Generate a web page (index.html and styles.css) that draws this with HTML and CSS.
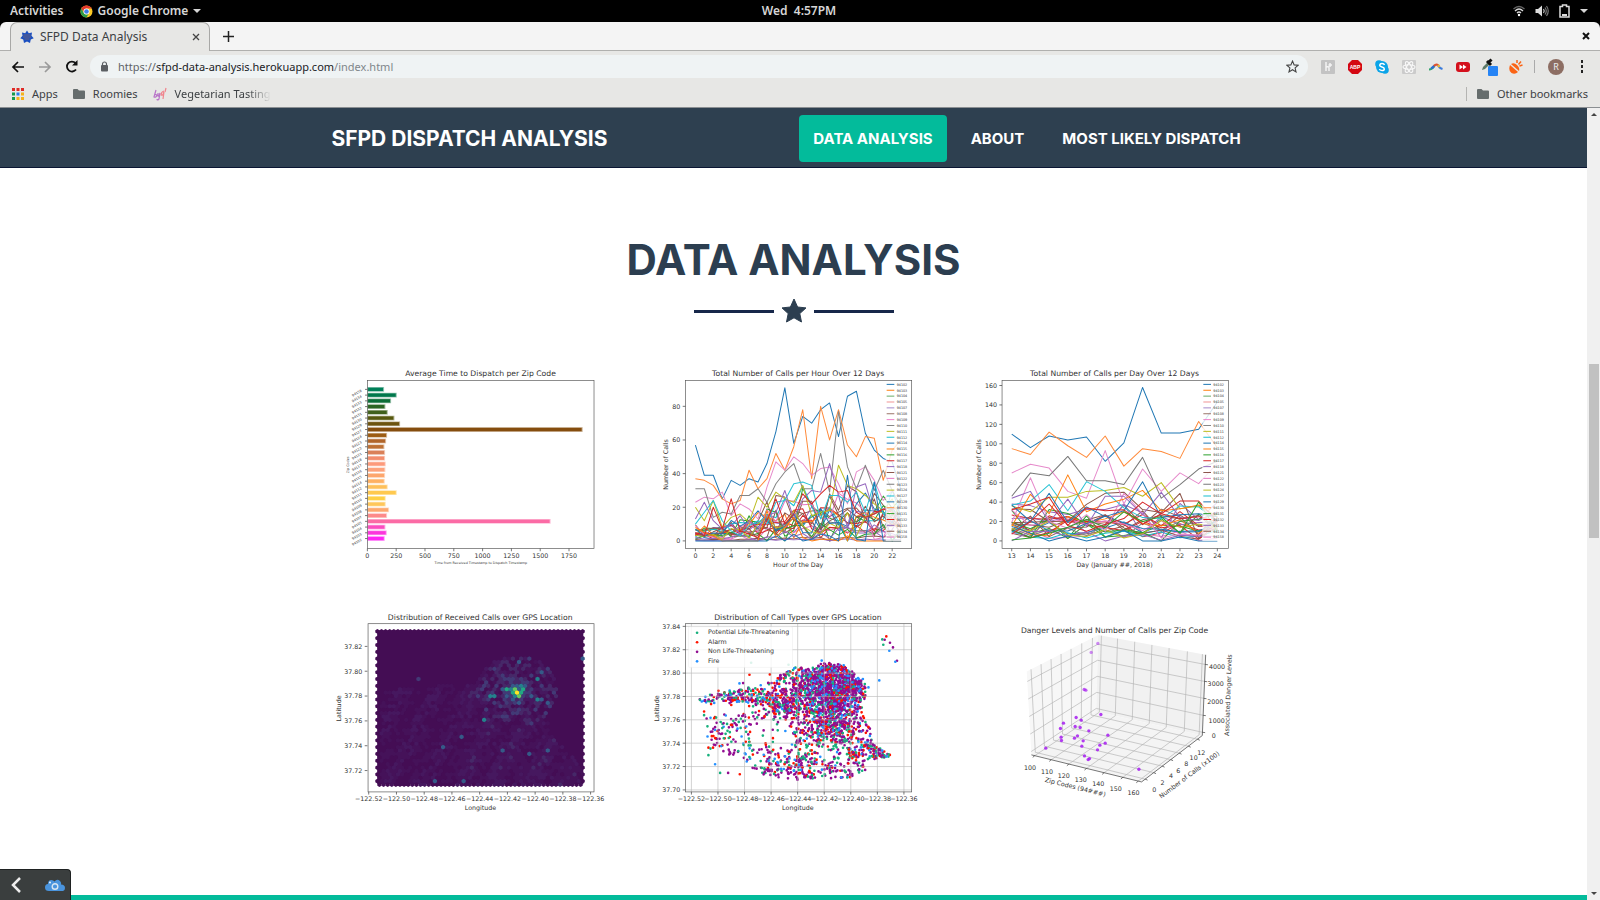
FILE: index.html
```html
<!DOCTYPE html>
<html lang="en">
<head>
<meta charset="utf-8">
<title>SFPD Data Analysis</title>
<link rel="stylesheet" href="styles.css">
</head>
<body>
<div class="system-bar">
  <div class="system-left">
    <button class="sys-btn">Activities</button>
    <button class="sys-btn app-menu">
      <svg width="13" height="13" viewBox="0 0 26 26" aria-hidden="true"><circle cx="13" cy="13" r="12" fill="#fbc926"/><path d="M2.6 7A12 12 0 0 1 23.4 7H13A6 6 0 0 0 7.8 16z" fill="#e2372b"/><path d="M2.6 7A12 12 0 0 0 13 25l5.2-9A6 6 0 0 1 7.8 16z" fill="#2c9c49"/><circle cx="13" cy="13" r="6" fill="#fff"/><circle cx="13" cy="13" r="4.6" fill="#3f7fe8"/></svg>
      <span>Google Chrome</span>
      <i class="caret"></i>
    </button>
  </div>
  <button class="sys-btn clock">Wed&nbsp; 4:57PM</button>
  <div class="system-right">
    <svg width="12" height="12" viewBox="0 0 24 24" fill="none" stroke="#d8d8d8" stroke-width="2.6" aria-hidden="true"><path d="M1 8Q12-2 23 8" stroke="#666"/><path d="M4 12Q12 4 20 12M8 16Q12 12 16 16"/><circle cx="12" cy="20" r="2.4" fill="#fff" stroke="none"/></svg>
    <svg width="14" height="12" viewBox="0 0 28 24" fill="none" stroke-width="2.4" aria-hidden="true"><path d="M1 8h5l8-7v22l-8-7H1z" fill="#ddd"/><path d="M17 8q3 4 0 8" stroke="#ccc"/><path d="M20 5q5 7 0 14M23 2q7 10 0 20" stroke="#777"/></svg>
    <svg width="11" height="14" viewBox="0 0 22 28" fill="none" stroke="#ddd" stroke-width="3" aria-hidden="true"><path d="M7 5V2h8v3h5v21H2V5z"/><path d="M6 22h10" stroke-width="4"/></svg>
    <i class="caret"></i>
  </div>
</div>

<div class="tab-strip">
  <div class="tab">
    <svg width="14" height="14" viewBox="0 0 28 28" aria-hidden="true"><path d="M14 1l3.6 5.4L24 5l-1 6.6 4.5 4.8-6 2.8L20 26l-6-3-6 3-1.500-6.800-6-2.800L5 11.600 4 5l6.400 1.400z" fill="#1b4fc0"/><path d="M7 10h14M6 14h16M9 18h10" stroke="#8a6a60" stroke-width="1.500"/></svg>
    <span class="tab-title">SFPD Data Analysis</span>
    <button class="icon-btn" aria-label="Close tab"><svg width="8" height="8" viewBox="0 0 8 8" stroke="#444" stroke-width="1.300"><path d="M1 1l6 6M7 1L1 7"/></svg></button>
  </div>
  <button class="icon-btn new-tab" aria-label="New tab"><svg width="11" height="11" viewBox="0 0 11 11" stroke="#222" stroke-width="1.500"><path d="M5.500 0v11M0 5.500h11"/></svg></button>
  <button class="icon-btn window-close" aria-label="Close window"><svg width="8" height="8" viewBox="0 0 8 8" stroke="#111" stroke-width="2"><path d="M1 1l6 6M7 1L1 7"/></svg></button>
</div>

<div class="toolbar">
  <div class="nav-buttons">
    <button class="icon-btn" aria-label="Back"><svg width="14" height="12" viewBox="0 0 14 12" fill="none" stroke="#111" stroke-width="1.700"><path d="M13 6H2M7 1L2 6l5 5"/></svg></button>
    <button class="icon-btn" aria-label="Forward"><svg width="14" height="12" viewBox="0 0 14 12" fill="none" stroke="#9a9a9a" stroke-width="1.700"><path d="M1 6h11M7 1l5 5-5 5"/></svg></button>
    <button class="icon-btn" aria-label="Reload"><svg width="13" height="13" viewBox="0 0 13 13" fill="none" stroke="#111" stroke-width="1.800"><path d="M11 9.500A5 5 0 1 1 10.500 3"/><path d="M12.500 0v5.500H7z" fill="#111" stroke="none"/></svg></button>
  </div>
  <div class="omnibox">
    <svg width="9" height="11" viewBox="0 0 9 11" aria-hidden="true"><rect x="1" y="4" width="7" height="6.500" rx="1" fill="#5b5f63"/><path d="M2.500 4.500V3a2 2 0 0 1 4 0v1.500" fill="none" stroke="#5b5f63" stroke-width="1.200"/></svg>
    <div class="url" role="textbox" aria-label="Address"><span class="dim">https://</span>sfpd-data-analysis.herokuapp.com<span class="faint">/index.html</span></div>
    <button class="icon-btn" aria-label="Bookmark this page"><svg width="13" height="13" viewBox="0 0 24 24" fill="none" stroke="#444" stroke-width="2"><path d="M12 2l3 7 7.500.600-5.700 5 1.700 7.400L12 18l-6.500 4 1.700-7.400-5.700-5L9 9z"/></svg></button>
  </div>
  <div class="extensions">
    <svg width="14" height="14" viewBox="0 0 14 14" aria-hidden="true"><rect width="14" height="14" rx="1" fill="#c3c3c3"/><path d="M5 2v9M5 7q3-1 3 1v3M9 3v4M7.500 5h3.500" stroke="#f4f4f4" stroke-width="1.500" fill="none"/></svg>
    <svg width="14" height="14" viewBox="0 0 14 14" aria-hidden="true"><path d="M4 0h6l4 4v6l-4 4H4l-4-4V4z" fill="#d40812"/><text x="7" y="9" text-anchor="middle" class="abp">ABP</text></svg>
    <svg width="14" height="14" viewBox="0 0 14 14" aria-hidden="true"><circle cx="7" cy="7" r="6" fill="#0ba4e8"/><circle cx="4" cy="4" r="3.800" fill="#0ba4e8"/><circle cx="10" cy="10" r="3.800" fill="#0ba4e8"/><path d="M9.500 5Q9 3.500 7 3.500T4.700 5.200Q4.700 6.500 7 7t2.300 1.900Q9.300 10.500 7 10.500T4.500 9" fill="none" stroke="#fff" stroke-width="1.500"/></svg>
    <svg width="14" height="14" viewBox="0 0 14 14" aria-hidden="true"><rect width="14" height="14" rx="1" fill="#cbcbcb"/><g fill="none" stroke="#f8f8f8" stroke-width="1.100"><ellipse cx="7" cy="7" rx="6" ry="2.300"/><ellipse cx="7" cy="7" rx="6" ry="2.300" transform="rotate(60 7 7)"/><ellipse cx="7" cy="7" rx="6" ry="2.300" transform="rotate(120 7 7)"/></g></svg>
    <svg width="14" height="14" viewBox="0 0 14 14" fill="none" stroke-width="2.200" aria-hidden="true"><path d="M0 9.500q3 0 5-3" stroke="#2fa36b"/><path d="M2 8.500q2-1 3.500-3" stroke="#2a6fd0"/><path d="M5 6q2-2.500 4.500-.5" stroke="#e2522d"/><path d="M9 5q1 3 4.500 4" stroke="#3a7bdc"/><path d="M9 5l1.500 2" stroke="#f1b52a"/></svg>
    <svg width="14" height="14" viewBox="0 0 14 14" aria-hidden="true"><rect y="2" width="14" height="10" rx="3" fill="#d4101c"/><path d="M3.500 4.500L7 7 3.500 9.500zM7 4.500L10.500 7 7 9.500z" fill="#fff"/></svg>
    <svg class="tight" width="17" height="19" viewBox="0 0 17 19" aria-hidden="true"><path d="M1 13l1-3 5-5 2 2-5 5z" fill="#5c7a68"/><path d="M6 4l4 4M7.500 5.500l3-3" stroke="#111" stroke-width="3"/><rect x="7" y="9" width="10" height="10" rx="1" fill="#2684f5"/></svg>
    <svg class="tight" width="14" height="14" viewBox="0 0 14 14" aria-hidden="true"><path d="M1 5l8 7q-3 3-6.500 1T1 5z" fill="#fb6415"/><path d="M2 4q3-2 6 1t2 6z" fill="#fb6415"/><path d="M8 3V0M9.500 4.500L12 1.500M10.500 6l3-1" stroke="#fb6415" stroke-width="1.500"/></svg>
    <i class="bar tight"></i>
    <button class="avatar">R</button>
    <button class="icon-btn" aria-label="Menu"><svg width="4" height="13" viewBox="0 0 4 13" fill="#222"><rect x="1" width="2" height="3"/><rect x="1" y="5" width="2" height="3"/><rect x="1" y="10" width="2" height="3"/></svg></button>
  </div>
</div>

<div class="bookmarks">
  <a class="bookmark" href="#"><svg width="12" height="12" viewBox="0 0 12 12" aria-hidden="true"><g fill="#df2a25"><path d="M0 0h3v3H0zM4.500 0h3v3h-3zM9 0h3v3H9z"/></g><path d="M0 4.500h3v3H0zM0 9h3v3H0z" fill="#169a4b"/><path d="M4.500 4.500h3v3h-3z" fill="#2a7de8"/><path d="M9 4.500h3v3H9zM4.500 9h3v3h-3zM9 9h3v3H9z" fill="#f5b21b"/></svg>Apps</a>
  <a class="bookmark" href="#"><svg width="12" height="10" viewBox="0 0 12 10" aria-hidden="true"><path d="M0 1q0-1 1-1h3.500L6 1.500h5q1 0 1 1V9q0 1-1 1H1q-1 0-1-1z" fill="#666d6d"/></svg>Roomies</a>
  <a class="bookmark fade" href="#"><svg width="14" height="14" viewBox="0 0 14 14" fill="none" stroke-width="1.200" aria-hidden="true"><path d="M3 3L1 10q2 1 3-2-1-1-2.500 0M5 6v3q1 1 2-3l-1 6q-2 2-2 0" stroke="#b873c8"/><path d="M11 4Q8 5 8 8q2 1 3-3l-1 7M12 5l1-4" stroke="#f0848c"/></svg>Vegetarian Tasting</a>
  <a class="bookmark other" href="#"><svg width="12" height="10" viewBox="0 0 12 10" aria-hidden="true"><path d="M0 1q0-1 1-1h3.500L6 1.500h5q1 0 1 1V9q0 1-1 1H1q-1 0-1-1z" fill="#666d6d"/></svg>Other bookmarks</a>
</div>

<div class="viewport">
  <div class="page">
    <nav class="site-nav">
      <div class="container nav-row">
        <a class="brand" href="#">SFPD DISPATCH ANALYSIS</a>
        <div class="links">
          <a class="link active" href="#">DATA ANALYSIS</a>
          <a class="link" href="#">ABOUT</a>
          <a class="link" href="#">MOST LIKELY DISPATCH</a>
        </div>
      </div>
    </nav>
    <section class="analysis">
      <h2>DATA ANALYSIS</h2>
      <div class="divider"><i></i><svg width="26" height="26" viewBox="0 0 26 26" aria-hidden="true"><path d="M13 1l3.600 8 8.400.900-6.200 5.700 1.700 8.400L13 19.800 5.500 24l1.700-8.400L1 9.900 9.400 9z" fill="#2c3e50" stroke="#2c3e50" stroke-linejoin="round"/></svg><i></i></div>
      <div class="container charts">
        <svg class="chart" id="dispatch" viewBox="36 -3 879 660" role="img" aria-label="Average time to dispatch"></svg>
        <svg class="chart" id="hourly" viewBox="-3 -3 879 660" role="img" aria-label="Calls per hour"></svg>
        <svg class="chart" id="daily" viewBox="18 -3 879 660" role="img" aria-label="Calls per day"></svg>
        <svg class="chart" id="density" viewBox="36 -9 879 660" role="img" aria-label="Call density"></svg>
        <svg class="chart" id="types" viewBox="12 -9 879 660" role="img" aria-label="Call types"></svg>
        <svg class="chart" id="danger" viewBox="-102 -39 879 660" role="img" aria-label="Danger levels"></svg>
      </div>
    </section>
    <section class="about"></section>
  </div>
  <div class="scrollbar"><i class="arrow up"></i><i class="thumb"></i><i class="arrow down"></i></div>
  <div class="dock">
    <button class="icon-btn" aria-label="Collapse"><svg width="10" height="16" viewBox="0 0 10 16" fill="none" stroke="#eee" stroke-width="2.500"><path d="M9 1L2 8l7 7"/></svg></button>
    <svg width="20" height="12" viewBox="0 0 20 12" aria-hidden="true"><path d="M4 12Q0 12 0 8.500T3 5Q3 1 6.500 1q2 0 3 1.500Q12-.5 15 2q1.500 1.500 1 3.500 4 0 4 3.500T16.500 12z" fill="#4a94dd"/><circle cx="10" cy="7.500" r="2.800" fill="none" stroke="#d8e6f2" stroke-width="1.400"/><circle cx="5" cy="3.500" r="1" fill="#e8f2fb"/></svg>
  </div>
</div>
<script src="charts.js"></script>
</body>
</html>
```

FILE: styles.css
```css
* { box-sizing: border-box; }
body {
  margin: 0;
  height: 100vh;
  overflow: hidden;
  display: flex;
  flex-direction: column;
  background: #000;
  color: #3c4043;
  font: 12px/18px "Noto Sans", sans-serif;
}
button { border: 0; padding: 0; background: none; color: inherit; font: inherit; }
a { color: inherit; text-decoration: none; }
svg { flex: none; display: block; }
.icon-btn { display: grid; place-items: center; }

.system-bar {
  flex: none;
  height: 22px;
  display: grid;
  grid-template-columns: 1fr auto 1fr;
  align-items: center;
  padding: 0 12px 0 10px;
  color: #d6d6d6;
  font-weight: 600;
}
.system-left, .app-menu, .system-right { display: flex; align-items: center; }
.system-left { gap: 16px; }
.app-menu { gap: 5px; }
.system-right { justify-content: flex-end; gap: 10px; }
.caret { border: 4px solid transparent; border-top-color: #d6d6d6; border-bottom: 0; }

.tab-strip {
  flex: none;
  height: 29px;
  display: flex;
  align-items: center;
  padding: 0 10px;
  background: #f4f4f4;
  border-bottom: 1px solid #b0b0ae;
  border-radius: 6px 6px 0 0;
}
.tab {
  align-self: stretch;
  width: 200px;
  display: flex;
  align-items: center;
  gap: 6px;
  padding: 0 9px;
  margin-bottom: -1px;
  background: #e7e7e5;
  border: 1px solid #a8a8a6;
  border-bottom: 0;
  border-radius: 7px 7px 0 0;
}
.tab-title { flex: 1; }
.new-tab { margin-left: 13px; }
.window-close { margin-left: auto; }

.toolbar {
  flex: none;
  height: 31px;
  display: flex;
  align-items: center;
  padding: 0 16px 0 11px;
  background: #e7e7e5;
}
.nav-buttons { display: flex; gap: 13px; width: 79px; }
.omnibox {
  flex: 1;
  height: 23px;
  display: flex;
  align-items: center;
  gap: 9px;
  padding: 0 9px 0 10px;
  border-radius: 12px;
  background: #eff3f4;
}
.url { flex: 1; color: #202124; font-size: 11px; }
.dim { color: #5f6368; }
.faint { color: #80868b; }
.extensions { display: flex; align-items: center; gap: 13px; margin-left: 13px; }
.tight { margin-left: -2px; }
.abp { font: bold 5px "Liberation Sans", sans-serif; fill: #fff; }
.bar { width: 1px; height: 13px; background: #aaa; }
.avatar { width: 16px; height: 16px; margin-right: 3px; border-radius: 50%; background: #8d6e63; color: #eee; font-size: 9px; line-height: 16px; }

.bookmarks {
  flex: none;
  height: 26px;
  display: flex;
  align-items: center;
  gap: 15px;
  padding: 0 12px 2px;
  background: #e7e7e5;
  border-bottom: 1px solid #8b8f92;
  font-size: 11px;
}
.bookmark { display: flex; align-items: center; gap: 8px; white-space: nowrap; }
.fade { mask-image: linear-gradient(90deg, #000 80%, transparent); }
.other { margin-left: auto; padding-left: 10px; border-left: 1px solid #b4b4b2; line-height: 14px; }

.viewport { position: relative; flex: 1; min-height: 0; display: flex; background: #fff; }
.page { flex: 1; overflow: hidden; }
.container { width: 60%; min-width: 950px; margin: 0 auto; padding: 0 10px 0 14px; }
.site-nav { background: #2e4050; border-bottom: 1px solid #0a1633; padding: 7px 0 5px; color: #fff; font-family: Inter, sans-serif; font-weight: 700; }
.nav-row { display: flex; align-items: center; justify-content: space-between; }
.brand { font-size: 21px; line-height: 24px; }
.links { display: flex; gap: 10px; padding-right: 5px; }
.link { padding: 0 14px; border-radius: 4px; font-size: 15px; line-height: 47px; }
.active { background: #03bb9b; }

.analysis { padding: 67px 0 77px; background: #fff; }
h2 { margin: 0; text-align: center; color: #2c3e50; font: 700 42px/50px Inter, sans-serif; }
.divider { display: flex; align-items: center; justify-content: center; gap: 7px; margin: 13px 0 30px; }
.divider i { width: 80px; height: 3px; background: #17284a; }
.charts { display: grid; grid-template-columns: repeat(3, 1fr); gap: 23px 24px; }
.chart { width: 100%; height: auto; font-family: "DejaVu Sans", sans-serif; fill: #333; }
.title { font-size: 23px; }
.label { font-size: 19px; }
.small { font-size: 10px; }
.about { height: 160px; background: #03bb9b; }

.scrollbar { width: 13px; display: flex; flex-direction: column; align-items: center; padding: 5px 0; background: #f0f0f0; }
.arrow { border: 3px solid transparent; }
.up { border-top: 0; border-bottom-color: #444; }
.down { border-bottom: 0; border-top-color: #444; margin-top: auto; }
.thumb { width: 10px; height: 174px; margin-top: 248px; background: #c1c1c1; }
.dock {
  position: absolute;
  left: 0;
  bottom: 0;
  height: 31px;
  display: flex;
  align-items: center;
  gap: 24px;
  padding: 0 5px 0 11px;
  background: #3a3e3e;
  border: 1px solid #1f2222;
  border-width: 1px 1px 0 0;
  border-radius: 0 4px 0 0;
}
```

FILE: charts.js
```js
const NS = "http://www.w3.org/2000/svg";
let seed = 7;
function rnd() {
  seed = (seed + 0x6d2b79f5) | 0;
  let t = Math.imul(seed ^ (seed >>> 15), 1 | seed);
  t = (t + Math.imul(t ^ (t >>> 7), 61 | t)) ^ t;
  return ((t ^ (t >>> 14)) >>> 0) / 4294967296;
}
function gauss() { return (rnd() + rnd() + rnd() + rnd() - 2) * 1.2; }

function add(parent, tag, attrs, text) {
  const el = document.createElementNS(NS, tag);
  for (const k in attrs) el.setAttribute(k, attrs[k]);
  if (text !== undefined) el.textContent = text;
  parent.appendChild(el);
  return el;
}
function text(svg, x, y, str, cls, anchor, angle) {
  const a = { x, y, class: cls, "text-anchor": anchor || "middle" };
  if (angle) a.transform = `rotate(${angle} ${x} ${y})`;
  add(svg, "text", a, str);
}
function frame(svg, x, y, w, h) {
  add(svg, "rect", { x, y, width: w, height: h, fill: "none", stroke: "#555", "stroke-width": 2 });
}
function xTicks(svg, bottom, ticks, x0, step) {
  ticks.forEach((t, i) => {
    const x = x0 + step * i;
    add(svg, "path", { d: `M${x} ${bottom}v8`, stroke: "#333", "stroke-width": 2 });
    text(svg, x, bottom + 28, t, "label");
  });
}
function yTicks(svg, left, ticks, y0, step) {
  ticks.forEach((t, i) => {
    const y = y0 + step * i;
    add(svg, "path", { d: `M${left} ${y}h-8`, stroke: "#333", "stroke-width": 2 });
    text(svg, left - 15, y + 7, t, "label", "end");
  });
}

const zips = "02 03 04 05 07 08 09 10 11 12 14 15 16 17 18 21 22 23 24 27 29 30 31 32 33 34 58".split(" ");
const cycle = ["#1f77b4", "#ff7f0e", "#2ca02c", "#d62728", "#9467bd", "#8c564b", "#e377c2", "#7f7f7f", "#bcbd22", "#17becf"];
const order = [5, 2, 3, 5, 4, 6, 0, 2, 5, 3, 7, 9, 4, 1, 5, 3, 2, 6, 5, 4, 8, 0];
const legendColors = ["#1f77b4", "#ff7f0e", "#67ac67", "#f09494", "#a48aca", "#9a7468", "#ee82cb", "#888", "#bcbd22", "#17becf",
  "#1f77b4", "#ff7f0e", "#2ca02c", "#d62728", "#9467bd", "#8c564b", "#e377c2", "#777", "#bcbd22", "#17becf",
  "#1f77b4", "#ff8a3a", "#2ca02c", "#e31a1c", "#9467bd", "#8c564b", "#e377c2"];

/* Average time to dispatch */
(function () {
  const svg = document.getElementById("dispatch");
  const ends = [194, 232, 215, 198, 205, 225, 242, 789, 203, 200, 195, 197, 197, 199, 198, 197, 196, 205, 232, 199, 199, 209, 203, 693, 198, 202, 196];
  const colors = ["#007f58", "#00784c", "#0b6d38", "#2b6523", "#40611c", "#57590f", "#6c530f", "#854d0e", "#9c5c14", "#b0652a", "#bd7034", "#da8058", "#f38d6d", "#fd9a7b", "#fda27b", "#fda66d", "#feb062", "#fec05a", "#ffc94f", "#ffd045", "#ffc75a", "#fda86e", "#fd8a8a", "#fb6ba5", "#fb4dc0", "#fb36dc", "#ff25f5"];
  text(svg, 484, 62, "Average Time to Dispatch per Zip Code", "title");
  ends.forEach((end, i) => {
    const y = 103 + i * 17.19;
    add(svg, "rect", { x: 145, y: y - 7, width: end - 144, height: 14, fill: colors[i], opacity: .45 });
    add(svg, "rect", { x: 147, y: y - 5, width: end - 149, height: 10, fill: colors[i] });
    add(svg, "path", { d: `M145 ${y}h-7`, stroke: "#333", "stroke-width": 2 });
    text(svg, 129, y + 6, "941" + zips[26 - i], "small", "end", -30);
  });
  frame(svg, 145, 76, 679, 504);
  xTicks(svg, 580, [0, 250, 500, 750, 1000, 1250, 1500, 1750], 145, 86.3);
  text(svg, 485, 627, "Time from Received Timestamp to Dispatch Timestamp", "small");
  text(svg, 90, 329, "Zip Codes", "small", "middle", -90);
})();

function lineChart(id, o) {
  const svg = document.getElementById(id);
  const path = vals => "M" + vals.map((v, i) => `${o.x0 + i * o.dx} ${557 - v * o.dy}`).join("L");
  text(svg, o.cx, 62, o.title, "title");
  const n = o.main[0].v.length;
  for (let k = 0; k < 22; k++) {
    const peak = o.levels[k % o.levels.length];
    const vals = [];
    for (let i = 0; i < n; i++) {
      const base = peak * (o.daily ? 1 : .35 + .65 * Math.min(1, Math.max(0, (i - 3) / 8)));
      vals.push(Math.max(0, base * (.85 + gauss() * .6)));
    }
    add(svg, "path", { d: path(vals), fill: "none", stroke: cycle[order[k]], "stroke-width": 3, "stroke-linejoin": "round" });
  }
  o.main.forEach(m => add(svg, "path", { d: path(m.v), fill: "none", stroke: m.c, "stroke-width": 3, "stroke-linejoin": "round" }));
  add(svg, "rect", { x: o.lx, y: 79, width: 70, height: 478, fill: "#fff", opacity: .8 });
  zips.forEach((z, i) => {
    const y = 88 + i * 17.6;
    add(svg, "path", { d: `M${o.lx + 3} ${y}h23`, stroke: legendColors[i], "stroke-width": 3 });
    text(svg, o.lx + 33, y + 4, "941" + z, "small", "start");
  });
  frame(svg, o.left, 76, 678, 504);
  xTicks(svg, 580, o.xt, o.x0, o.xStep);
  yTicks(svg, o.left, o.yt, 557, -o.yStep);
  text(svg, o.cx, 634, o.xl, "label");
  text(svg, o.yx, 328, "Number of Calls", "label", "middle", -90);
}

lineChart("hourly", {
  title: "Total Number of Calls per Hour Over 12 Days", cx: 444, left: 106, x0: 136, dx: 26.8, dy: 5.04, lx: 706,
  xt: [0, 2, 4, 6, 8, 10, 12, 14, 16, 18, 20, 22], xStep: 53.6, yt: [0, 20, 40, 60, 80], yStep: 100.8,
  xl: "Hour of the Day", yx: 55, levels: [18, 14, 9, 19, 17, 6, 12, 18, 2, 15, 11, 20, 1, 16],
  main: [
    { c: "#1f77b4", v: [57, 39, 39, 25, 36, 33, 37, 35, 46, 65, 91, 58, 74, 70, 78, 82, 62, 86, 89, 64, 54, 49, 47, 30] },
    { c: "#ff8a3a", v: [37, 36, 33, 25, 22, 24, 42, 31, 37, 52, 42, 56, 78, 37, 80, 60, 78, 57, 50, 62, 61, 36, 54, 60] },
    { c: "#e68acb", v: [23, 26, 25, 29, 15, 22, 19, 13, 32, 47, 42, 50, 46, 39, 43, 44, 34, 22, 41, 44, 36, 24, 30, 20] },
    { c: "#858585", v: [31, 31, 14, 17, 16, 27, 27, 31, 23, 34, 41, 46, 31, 31, 52, 29, 77, 44, 31, 45, 30, 42, 30, 20] },
    { c: "#bcbd22", v: [20, 12, 24, 8, 14, 16, 11, 26, 20, 29, 25, 23, 33, 15, 17, 18, 45, 33, 31, 27, 22, 18, 25, 10] },
    { c: "#28c3d4", v: [10, 17, 24, 12, 6, 3, 9, 12, 10, 23, 24, 34, 35, 33, 13, 27, 27, 23, 29, 17, 35, 16, 20, 12] },
    { c: "#9467bd", v: [13, 23, 12, 7, 10, 4, 12, 8, 15, 17, 30, 13, 25, 30, 29, 46, 27, 8, 32, 34, 16, 19, 20, 10] },
    { c: "#ff7f0e", v: [8, 5, 3, 0, 0, 0, 0, 0, 18, 2, 8, 14, 2, 0, 1, 1, 0, 3, 0, 0, 0, 0, 0, 0] },
    { c: "#1f77b4", v: [0, 0, 0, 0, 0, 0, 0, 0, 0, 3, 0, 4, 0, 1, 4, 3, 0, 39, 1, 0, 35, 0, 0, 0] },
    { c: "#d62728", v: [5, 3, 20, 7, 25, 6, 4, 2, 12, 25, 10, 16, 28, 22, 28, 33, 29, 30, 17, 14, 16, 19, 17, 8] }
  ]
});

lineChart("daily", {
  title: "Total Number of Calls per Day Over 12 Days", cx: 463, left: 126, x0: 155, dx: 56, dy: 2.91, lx: 726, daily: true,
  xt: [13, 14, 15, 16, 17, 18, 19, 20, 21, 22, 23, 24], xStep: 56, yt: [0, 20, 40, 60, 80, 100, 120, 140, 160], yStep: 58.2,
  xl: "Day (January ##, 2018)", yx: 63, levels: [20, 18, 24, 21, 30, 7, 15, 16, 20, 22, 16, 7, 34, 19],
  main: [
    { c: "#1f77b4", v: [110, 96, 108, 104, 107, 82, 101, 158, 111, 111, 115, 143] },
    { c: "#ff8a3a", v: [95, 89, 112, 98, 86, 108, 77, 95, 92, 85, 123, 96] },
    { c: "#e68acb", v: [70, 79, 75, 51, 44, 93, 38, 74, 51, 70, 59, 80] },
    { c: "#e68acb", v: [19, 65, 20, 13, 27, 10, 49, 28, 3, 7, 6, 15] },
    { c: "#777", v: [46, 70, 67, 87, 62, 62, 58, 86, 44, 58, 74, 82] },
    { c: "#bcbd22", v: [36, 30, 45, 45, 51, 52, 55, 46, 60, 33, 36, 25] },
    { c: "#28c3d4", v: [37, 41, 58, 31, 61, 51, 34, 24, 23, 36, 35, 20] },
    { c: "#ff7f0e", v: [15, 48, 28, 68, 30, 38, 43, 52, 31, 33, 37, 24] },
    { c: "#9467bd", v: [44, 51, 19, 43, 15, 46, 46, 27, 50, 24, 21, 30] },
    { c: "#1f77b4", v: [37, 20, 49, 19, 35, 25, 31, 61, 24, 27, 28, 25] },
    { c: "#1f77b4", v: [15, 8, 0, 5, 0, 4, 11, 0, 0, 4, 0, 0] },
    { c: "#d62728", v: [32, 38, 45, 16, 34, 31, 32, 17, 28, 41, 41, 20] },
    { c: "#d62728", v: [7, 20, 38, 16, 10, 17, 23, 40, 28, 23, 25, 20] },
    { c: "#2ca02c", v: [1, 3, 8, 14, 22, 14, 30, 20, 25, 8, 40, 10] }
  ]
});

/* Hexagonal density map */
(function () {
  const svg = document.getElementById("density");
  const shades = ["#440d54", "#451259", "#46185f", "#462868", "#423a76", "#355a88", "#24808c", "#22a884", "#63ca60", "#fde725"];
  const groups = shades.map(() => "");
  const hot = [[587, 266, 8], [594, 274, 9], [563, 266, 7], [594, 287, 8], [610, 272, 7], [605, 282, 7], [578, 280, 7], [610, 262, 7], [525, 282, 6], [514, 282, 6],
    [649, 298, 6], [673, 298, 5], [686, 314, 5], [661, 216, 5], [655, 240, 6], [495, 355, 6], [550, 446, 5], [680, 454, 5], [371, 437, 5],
    [347, 536, 5], [439, 545, 5], [426, 412, 5], [792, 175, 5], [297, 241, 4], [625, 462, 5], [595, 190, 5]];
  const cells = [];
  for (let r = 0; r < 46; r++) for (let c = 0; c < 51; c++) {
    const x = 175 + c * 12.3 + (r % 2 ? 6.15 : 0), y = 94 + r * 10.2;
    if (x > 796) continue;
    const d = Math.hypot((x - 592) / 1.15, y - 272);
    let heat = 0;
    if (d < 20) heat = 5 + rnd() * 2;
    else if (d < 42) heat = 2.5 + rnd() * 3;
    else if (d < 105) heat = rnd() * 4.6;
    else if (y > 245 + (x < 500 ? (500 - x) * .08 : 0) && x > 185 && x < 690 + Math.max(0, y - 400)) {
      heat = (x < 430 ? 1.2 : 1.7) + Math.sin(x / 17 + r / 3) * .6 + (rnd() - .5) * 2.2;
    }
    cells.push([x, y, Math.max(0, Math.floor(heat))]);
  }
  hot.forEach(h => {
    let best = cells[0], bd = 1e9;
    cells.forEach(c => { const q = Math.hypot(c[0] - h[0], c[1] - h[1]); if (q < bd) { bd = q; best = c; } });
    best[2] = h[2];
  });
  cells.forEach(c => { groups[c[2]] += `M${c[0]} ${c[1] - 7}l6.300 3.500v7l-6.300 3.500-6.300-3.500v-7z`; });
  text(svg, 483, 59, "Distribution of Received Calls over GPS Location", "title");
  add(svg, "rect", { x: 175, y: 94, width: 617, height: 458, fill: shades[0] });
  groups.forEach((d, i) => { if (d) add(svg, "path", { d, fill: shades[i] }); });
  frame(svg, 147, 71, 677, 504);
  xTicks(svg, 575, ["−122.52", "−122.50", "−122.48", "−122.46", "−122.44", "−122.42", "−122.40", "−122.38", "−122.36"], 149, 83.1);
  yTicks(svg, 145, ["37.82", "37.80", "37.78", "37.76", "37.74", "37.72"], 139, 74.4);
  text(svg, 484, 629, "Longitude", "label");
  text(svg, 66, 325, "Latitude", "label", "middle", -90);
})();

/* Call types scatter */
(function () {
  const svg = document.getElementById("types");
  const colors = ["#17b07c", "#ff1400", "#910d91", "#2490ff"];
  const city = [[162, 294], [185, 285], [300, 262], [390, 240], [430, 200], [500, 203], [530, 190], [560, 187], [600, 192], [630, 225], [663, 255], [662, 295], [648, 315],
    [665, 370], [690, 410], [700, 440], [745, 470], [670, 480], [660, 520], [610, 532], [450, 541], [320, 522], [272, 470], [190, 444], [182, 350]];
  function inside(x, y) {
    let hit = false;
    for (let i = 0, j = city.length - 1; i < city.length; j = i++) {
      const [xi, yi] = city[i], [xj, yj] = city[j];
      if ((yi > y) !== (yj > y) && x < (xj - xi) * (y - yi) / (yj - yi) + xi) hit = !hit;
    }
    return hit;
  }
  const layers = [];
  function dot(x, y, k) { layers.push([x, y, k]); }
  function kind(p) { const r = rnd(); return r < p ? 2 : r < p + (1 - p) * .46 ? 0 : r < p + (1 - p) * .8 ? 1 : 3; }
  function scatter(n, cx, cy, sx, sy, p) {
    for (let i = 0; i < n; i++) {
      const x = cx + gauss() * sx, y = cy + gauss() * sy;
      if (inside(x, y)) dot(x, y, kind(p));
    }
  }
  for (let i = 0; i < 1900; i++) {
    const x = 160 + rnd() * 590, y = 185 + rnd() * 360;
    if (!inside(x, y)) continue;
    if (x < 375 && y > 312 && y < 342) continue;
    if (x > 320 && x < 430 && y > 360 && y < 440 && rnd() < .75) continue;
    if (x < 450 && y > 340 && rnd() < .4) continue;
    if (x > 600 && y > 330 && y < 420 && rnd() < .5) continue;
    dot(x, y, kind(.45));
  }
  scatter(110, 280, 290, 110, 18, .45);
  scatter(110, 410, 325, 50, 24, .55);
  scatter(500, 530, 265, 120, 85, .5);
  scatter(800, 575, 262, 80, 60, .72);
  scatter(240, 570, 375, 65, 40, .5);
  scatter(90, 420, 500, 90, 35, .45);
  scatter(110, 680, 450, 55, 28, .5);
  for (let i = 0; i < 45; i++) dot(560 + gauss() * 75, 262 + gauss() * 55, 3);
  [[711, 118, 0], [714, 134, 0], [723, 109, 1], [718, 119, 2], [734, 128, 2], [743, 142, 2], [732, 152, 3], [755, 182, 2], [750, 185, 3],
    [210, 492, 3], [190, 465, 0], [225, 518, 0], [249, 518, 2], [284, 522, 1], [313, 224, 1], [374, 223, 1], [283, 250, 3], [294, 249, 2],
    [177, 334, 1], [180, 300, 2], [170, 304, 3], [242, 346, 3], [177, 345, 0], [220, 272, 1], [430, 194, 0], [318, 188, 0]].forEach(d => dot(...d));
  text(svg, 458, 59, "Distribution of Call Types over GPS Location", "title");
  for (let s = 0; s < layers.length; s += 60) {
    colors.forEach((c, k) => {
      let d = "";
      layers.slice(s, s + 60).forEach(l => { if (l[2] === k) d += `M${l[0].toFixed(1)} ${l[1].toFixed(1)}h.01`; });
      if (d) add(svg, "path", { d, stroke: c, "stroke-width": 8, "stroke-linecap": "round" });
    });
  }
  let grid = "";
  for (let i = 0; i < 9; i++) grid += `M${139 + i * 79.6} 71v504`;
  for (let i = 0; i < 8; i++) grid += `M121 ${79 + i * 70}h678`;
  add(svg, "path", { d: grid, stroke: "#b0b0b0", "stroke-width": 2, opacity: .85 });
  add(svg, "rect", { x: 130, y: 80, width: 312, height: 122, rx: 4, fill: "#fff", stroke: "#ddd", opacity: .85 });
  ["Potential Life-Threatening", "Alarm", "Non Life-Threatening", "Fire"].forEach((t, i) => {
    add(svg, "circle", { cx: 156, cy: 98 + i * 28.6, r: 4, fill: colors[i] });
    text(svg, 189, 103 + i * 28.6, t, "label", "start");
  });
  frame(svg, 121, 71, 678, 504);
  xTicks(svg, 575, ["−122.52", "−122.50", "−122.48", "−122.46", "−122.44", "−122.42", "−122.40", "−122.38", "−122.36"], 139, 79.6);
  yTicks(svg, 121, ["37.84", "37.82", "37.80", "37.78", "37.76", "37.74", "37.72", "37.70"], 79, 70);
  text(svg, 458, 629, "Longitude", "label");
  text(svg, 42, 325, "Latitude", "label", "middle", -90);
})();

/* Danger levels, 3D */
(function () {
  const svg = document.getElementById("danger");
  const A = [94, 434], B = [288, 304], C = [606, 376], D = [424, 515], TA = [80, 184], TB = [294, 75], TC = [616, 134];
  const poly = (pts, fill) => add(svg, "path", { d: "M" + pts.map(p => p.join(" ")).join("L") + "z", fill });
  poly([A, B, TB, TA], "#f7f7f7");
  poly([B, C, TC, TB], "#f1f1f1");
  poly([A, B, C, D], "#f4f4f4");
  const mix = (p, q, t) => [p[0] + (q[0] - p[0]) * t, p[1] + (q[1] - p[1]) * t];
  let g = "";
  const seg = (...p) => { g += "M" + p.map(q => q.join(" ")).join("L"); };
  [.03, .18, .34, .5, .66, .83, .97].forEach(t => seg(mix(A, D, t), mix(B, C, t), mix(TB, TC, t)));
  [.06, .2, .34, .48, .62, .77, .92].forEach(t => seg(mix(TA, TB, t), mix(A, B, t), mix(D, C, t)));
  [.04, .25, .46, .67, .88].forEach(t => seg(mix(A, TA, t), mix(B, TB, t), mix(C, TC, t)));
  add(svg, "path", { d: g, fill: "none", stroke: "#b4b4b4", "stroke-width": 2 });
  add(svg, "path", { d: `M${A}L${D}L${C}L${TC}`, fill: "none", stroke: "#333", "stroke-width": 2 });
  let ticks = "";
  [.03, .18, .34, .5, .66, .83, .97].forEach(t => { const p = mix(A, D, t); ticks += `M${p}l-6 5`; });
  [.06, .2, .34, .48, .62, .77, .92].forEach(t => { const p = mix(D, C, t); ticks += `M${p}l7 3`; });
  [.04, .25, .46, .67, .88].forEach(t => { const p = mix(C, TC, t); ticks += `M${p}l8 1`; });
  add(svg, "path", { d: ticks, stroke: "#333", "stroke-width": 2 });
  [[293, 100], [273, 127], [252, 238], [257, 240], [302, 313], [228, 322], [243, 330], [190, 339], [181, 355], [225, 349], [240, 352], [266, 362], [183, 381], [184, 391],
    [223, 384], [232, 377], [249, 392], [245, 408], [323, 375], [315, 399], [299, 405], [292, 419], [137, 414], [253, 437], [264, 448], [268, 445], [416, 477]]
    .forEach(([cx, cy]) => add(svg, "circle", { cx, cy, r: 5, fill: "#a61cf0", opacity: cy < 130 ? .5 : cy < 250 ? .7 : .85 }));
  text(svg, 343, 69, "Danger Levels and Number of Calls per Zip Code", "title");
  [[90, 479, 100], [141, 491, 110], [191, 502, 120], [242, 515, 130], [294, 528, 140], [347, 542, 150], [400, 555, 160],
    [462, 544, 0], [487, 524, 2], [512, 504, 4], [534, 487, 6], [558, 467, 8], [580, 450, 10], [603, 434, 12],
    [640, 382, 0], [649, 339, 1000], [645, 281, 2000], [646, 229, 3000], [650, 178, 4000]].forEach(t => text(svg, t[0], t[1], t[2], "label"));
  text(svg, 224, 537, "Zip Codes (94###)", "label", "middle", 14);
  text(svg, 571, 499, "Number of Calls (x100)", "label", "middle", -37);
  text(svg, 690, 255, "Associated Danger Levels", "label", "middle", -88);
})();
```
